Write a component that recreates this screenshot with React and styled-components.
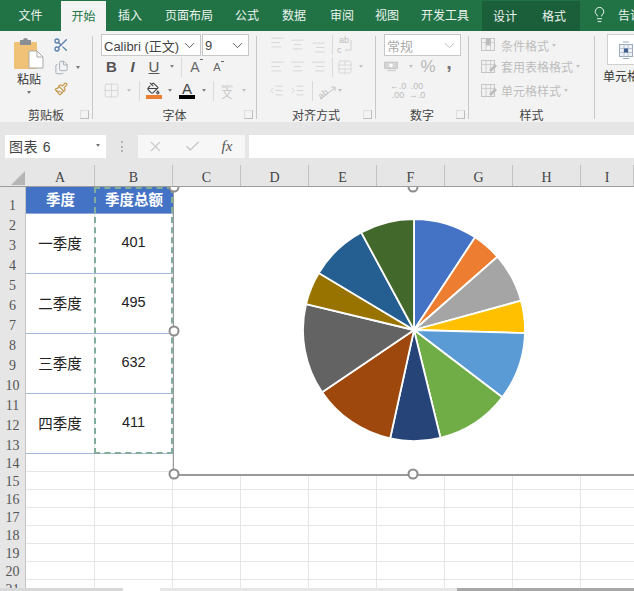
import React from 'react'
import styled, { createGlobalStyle } from 'styled-components'
import {
  AlignCenter, AlignLeft, AlignRight, Check, ChevronDown, Files, Grid2x2,
  IndentDecrease, IndentIncrease, Lightbulb, Paintbrush, PaintBucket, Scissors,
  TableCellsMerge, X,
} from 'lucide-react'

const CJK = '"Liberation Sans", "Noto Sans CJK SC", sans-serif'

const GlobalStyle = createGlobalStyle`
  html, body { margin: 0; padding: 0; overflow: hidden; background: #fff; }
  body { font-family: ${CJK}; }
`

const Page = styled.div`
  width: 634px;
  height: 591px;
  display: flex;
  flex-direction: column;
  overflow: hidden;
`

/* ---------- title tabs ---------- */
const TabBar = styled.div`
  height: 31px;
  flex: none;
  display: flex;
  background: #217346;
`

const Tab = styled.div`
  flex: none;
  width: ${p => p.$w}px;
  box-sizing: border-box;
  padding-bottom: 2px;
  margin-top: ${p => (p.$active || p.$tool ? 1 : 0)}px;
  display: flex;
  align-items: center;
  justify-content: ${p => (p.$left ? 'flex-start' : 'center')};
  white-space: nowrap;
  font-size: 12px;
  color: ${p => (p.$active ? '#217346' : '#edf4f0')};
  background: ${p => (p.$active ? '#f3f3f3' : p.$tool ? '#1b5e3a' : 'transparent')};
`

/* ---------- ribbon ---------- */
const Ribbon = styled.div`
  height: 91px;
  flex: none;
  display: flex;
  background: #f3f3f3;
  overflow: hidden;
`

const Group = styled.div`
  flex: none;
  width: ${p => p.$w}px;
  display: flex;
  flex-direction: column;
`

const Divider = styled.div`
  flex: none;
  width: 1px;
  margin: 5px 0 3px;
  background: #c9c9c9;
`

const GroupBody = styled.div`
  height: 72px;
  padding: 3px 0 0 ${p => p.$pad || 0}px;
  display: grid;
  grid-template-rows: 22px 21px 27px;
`

const GroupFoot = styled.div`
  position: relative;
  height: 16px;
  display: flex;
  align-items: center;
  justify-content: center;
  font-size: 12px;
  color: #444;
`

const Expander = styled.span`
  position: absolute;
  right: ${p => p.$r}px;
  top: 4px;
  width: 7px;
  height: 7px;
  border: 1px solid #bdbdbd;
  border-top-color: #dedede;
  border-left-color: #dedede;
`

const IconRow = styled.div`
  display: flex;
  align-items: center;
`

const Slot = styled.div`
  flex: none;
  width: ${p => p.$w}px;
  margin-top: ${p => p.$dy || 0}px;
  display: flex;
  align-items: center;
  justify-content: center;
  color: ${p => p.$color || '#cdcdcd'};
`

const Sep = styled.div`
  width: 1px;
  height: 20px;
  background: #dadada;
`

const Caret = styled.span`
  width: 0;
  height: 0;
  border-left: 2.5px solid transparent;
  border-right: 2.5px solid transparent;
  border-top: 3px solid ${p => p.$color || '#c4c4c4'};
`

const PasteCol = styled.div`
  flex: none;
  width: 53px;
  box-sizing: border-box;
  padding: 7px 0 0 5px;
  display: flex;
  flex-direction: column;
  align-items: center;
  font-size: 12px;
  line-height: 16px;
  color: #333;
`

const PasteText = styled.span`
  margin: 3px 0 3px;
`

const ClipBody = styled.div`
  height: 75px;
  display: flex;
`

const ClipTools = styled.div`
  padding-top: 3px;
  display: grid;
  grid-template-rows: 22px 22px 22px;
`

const Select = styled.div`
  height: 22px;
  width: ${p => p.$w}px;
  box-sizing: border-box;
  flex: none;
  margin-right: ${p => p.$gap || 0}px;
  padding: 0 2px;
  display: flex;
  align-items: center;
  justify-content: space-between;
  background: #fff;
  border: 1px solid #c8c8c8;
  font-size: 13px;
  white-space: nowrap;
  color: ${p => p.$color || '#444'};
`

const FontLetter = styled.span`
  font-family: "Liberation Sans", sans-serif;
  font-size: 15px;
  font-weight: ${p => (p.$bold ? 700 : 400)};
  font-style: ${p => (p.$italic ? 'italic' : 'normal')};
  text-decoration: ${p => (p.$under ? 'underline' : 'none')};
  color: #555;
`

const SizeLetter = styled.span`
  position: relative;
  font-size: ${p => p.$size}px;
  color: #666;
  &::after {
    content: '';
    position: absolute;
    right: -3px;
    top: 0;
    width: 3px;
    height: 1px;
    background: #666;
  }
`

const ColorLetter = styled.div`
  display: flex;
  flex-direction: column;
  align-items: center;
  font-size: 15px;
  line-height: 13px;
  color: #444;
`

const ColorBar = styled.div`
  width: ${p => p.$w}px;
  height: 4px;
  background: ${p => p.$color};
`

const Wen = styled.div`
  display: flex;
  flex-direction: column;
  align-items: center;
  font-size: 11px;
  line-height: 10px;
  color: #c4c4c4;
  & > small { font-size: 6px; line-height: 6px; }
`

const Percent = styled.span`
  font-size: 17px;
  color: #b8b8b8;
`

const Comma = styled.span`
  margin-top: -9px;
  font-size: 20px;
  font-weight: 700;
  line-height: 20px;
  color: #777;
`

const Decimals = styled.div`
  font-size: 9px;
  line-height: 9px;
  text-align: center;
  color: #bbb;
`

const StyleRow = styled.div`
  display: flex;
  align-items: center;
  font-size: 12px;
  color: #bdbdbd;
  white-space: nowrap;
`

const StyleIcon = styled.div`
  flex: none;
  width: 20px;
  margin-right: 2px;
  display: flex;
  justify-content: center;
`

const CellBox = styled.div`
  width: 50px;
  height: 31px;
  margin: 3px 0 3px 12px;
  padding-left: 8px;
  box-sizing: border-box;
  display: flex;
  align-items: center;
  background: #fff;
  border: 1px solid #d0d0d0;
`

const CellLabel = styled.div`
  padding-left: 8px;
  font-size: 12px;
  line-height: 18px;
  white-space: nowrap;
  color: #333;
`

const CellCaret = styled.div`
  padding: 5px 0 0 26px;
  line-height: 0;
`

/* ---------- formula bar ---------- */
const FormulaBar = styled.div`
  height: 43px;
  flex: none;
  box-sizing: border-box;
  padding: 13px 0 7px 5px;
  display: flex;
  background: #e6e6e6;
`

const NameBox = styled.div`
  flex: none;
  width: 101px;
  box-sizing: border-box;
  padding: 0 6px 2px 4px;
  display: flex;
  align-items: center;
  justify-content: space-between;
  background: #fff;
  font-size: 14px;
  letter-spacing: 0.6px;
  color: #444;
`

const Grip = styled.div`
  flex: none;
  width: 32px;
  display: flex;
  align-items: center;
  justify-content: center;
  &::before {
    content: '';
    height: 11px;
    border-left: 2px dotted #b4b4b4;
  }
`

const FxButtons = styled.div`
  flex: none;
  width: 107px;
  margin-right: 4px;
  display: flex;
  align-items: center;
  background: #f7f7f7;
`

const FxSlot = styled.div`
  flex: none;
  width: ${p => p.$w}px;
  display: flex;
  justify-content: center;
  color: ${p => p.$color || '#c8c8c8'};
  font-family: "Liberation Serif", serif;
  font-style: italic;
  font-size: 15px;
`

const FormulaInput = styled.div`
  flex: 1;
  background: #fff;
`

/* ---------- sheet ---------- */
const ColHeader = styled.div`
  height: 22px;
  flex: none;
  box-sizing: border-box;
  display: flex;
  background: #e6e6e6;
  border-bottom: 1px solid #9c9c9c;
`

const Corner = styled.div`
  flex: none;
  width: 26px;
  box-sizing: border-box;
  padding: 6px 0 0 11px;
  line-height: 0;
`

const ColName = styled.div`
  flex: none;
  width: ${p => p.$w}px;
  box-sizing: border-box;
  display: flex;
  align-items: center;
  justify-content: center;
  padding-top: 4px;
  border-right: 1px solid #c2c2c2;
  font-family: "Liberation Serif", serif;
  font-size: 14px;
  color: #444;
`

const Body = styled.div`
  flex: 1;
  min-height: 0;
  display: flex;
  overflow: hidden;
`

const RowHeaders = styled.div`
  flex: none;
  width: 26px;
  box-sizing: border-box;
  background: #e6e6e6;
  border-right: 1px solid #c4c4c4;
`

const RowName = styled.div`
  height: ${p => p.$h}px;
  box-sizing: border-box;
  padding-bottom: 1px;
  display: flex;
  align-items: flex-end;
  justify-content: center;
  font-family: "Liberation Serif", serif;
  font-size: 14px;
  line-height: 15px;
  color: #555;
`

const Sheet = styled.div`
  position: relative;
  flex: 1;
  min-width: 0;
  overflow: hidden;
  display: grid;
  grid-template-columns: 69px 78px repeat(7, 68px);
  grid-template-rows: ${p => p.$rows};
  background: #fff;
`

const Cell = styled.div`
  box-sizing: border-box;
  border-right: 1px solid #e6e6e6;
  border-bottom: 1px solid #e6e6e6;
`

const HeadCell = styled.div`
  box-sizing: border-box;
  padding-bottom: 3px;
  display: flex;
  align-items: center;
  justify-content: center;
  background: #4472c4;
  border-bottom: 1px solid #8eaadb;
  font-size: 14.5px;
  font-weight: 700;
  color: #fff;
`

const DataCell = styled.div`
  grid-row: span 3;
  box-sizing: border-box;
  padding-bottom: 3px;
  display: flex;
  align-items: center;
  justify-content: center;
  border-bottom: 1px solid #a3b9dc;
  border-right: 1px solid #e6e6e6;
  font-size: 14.5px;
  color: #222;
`

const CopyMarquee = styled.div`
  position: absolute;
  left: 68px;
  top: 0;
  width: 79px;
  height: 267px;
  box-sizing: border-box;
  border: 2px dashed #82ad9c;
`

const Chart = styled.div`
  position: absolute;
  left: 147px;
  top: 0;
  width: 480px;
  height: 289px;
  box-sizing: border-box;
  padding: 0 0 2px 1px;
  display: flex;
  align-items: center;
  justify-content: center;
  background: #fff;
  border-right: 1px solid #9a9a9a;
  border-left: 1.5px solid #9a9a9a;
  border-bottom: 2px solid #9a9a9a;
`

const Handle = styled.span`
  position: absolute;
  left: ${p => p.$x};
  top: ${p => p.$y};
  width: 11px;
  height: 11px;
  box-sizing: border-box;
  transform: translate(-50%, -50%);
  background: #fff;
  border: 2px solid #8c8c8c;
  border-radius: 50%;
`

const SheetTabs = styled.div`
  height: 3px;
  flex: none;
  display: flex;
  background: #e4e4e4;
`

const SheetTabFill = styled.div`
  flex: ${p => (p.$grow ? 1 : 'none')};
  width: ${p => p.$w}px;
  background: ${p => p.$color};
`

/* ---------- data ---------- */
const TABS = [
  ['文件', 61], ['开始', 45, 'active'], ['插入', 48], ['页面布局', 70], ['公式', 46], ['数据', 48],
  ['审阅', 48], ['视图', 42], ['开发工具', 74], ['设计', 46, 'tool'], ['格式', 52, 'tool'],
]
const COLUMNS = [['A', 69], ['B', 78], ['C', 68], ['D', 68], ['E', 68], ['F', 68], ['G', 68], ['H', 68], ['I', 53]]
const ROW_HEIGHTS = [27, ...Array(12).fill(20), ...Array(8).fill(18)]
const QUARTERS = [['一季度', 401], ['二季度', 495], ['三季度', 632], ['四季度', 411]]
const PIE = [
  [33.4, '#4472c4'], [48.7, '#ed7d31'], [74.7, '#a5a5a5'], [91.6, '#ffc000'],
  [127.3, '#5b9bd5'], [166.2, '#70ad47'], [192.4, '#264478'], [235.9, '#9e480e'],
  [283.5, '#636363'], [300.9, '#997300'], [331.6, '#255e91'], [360, '#43682b'],
]

function PasteIcon() {
  return (
    <svg width="30" height="31" viewBox="0 0 30 31">
      <rect x="0" y="4" width="23" height="27" rx="1" fill="#efc277" />
      <rect x="6" y="2" width="11" height="5" fill="#8a8f96" />
      <circle cx="11.5" cy="2.5" r="2.5" fill="#8a8f96" />
      <path d="M15 13h8l6 6v11H15z" fill="#fff" stroke="#a9a9a9" />
      <path d="M23 13v6h6" fill="none" stroke="#a9a9a9" />
    </svg>
  )
}

function WrapIcon() {
  return (
    <svg width="18" height="22" viewBox="0 0 18 22">
      <text x="3" y="9" fontSize="9" fill="#bdbdbd" fontFamily="Liberation Sans">ab</text>
      <text x="1" y="19" fontSize="9" fill="#bdbdbd" fontFamily="Liberation Sans">c</text>
      <path d="M9 16h6M15 6v10" stroke="#cfcfcf" fill="none" />
    </svg>
  )
}

function OrientIcon() {
  return (
    <svg width="20" height="18" viewBox="0 0 20 18">
      <text x="1" y="15" fontSize="9" fill="#bdbdbd" fontFamily="Liberation Sans" transform="rotate(-40 6 12)">ab</text>
      <path d="M3 17L18 6M14 5h4v4" stroke="#c4c4c4" fill="none" />
    </svg>
  )
}

function CurrencyIcon() {
  return (
    <svg width="20" height="16" viewBox="0 0 20 16">
      <rect x="1" y="1" width="18" height="9" fill="#d6d6d6" stroke="#b8b8b8" />
      <circle cx="10" cy="5.5" r="2.5" fill="#fff" />
      <path d="M5 13h12" stroke="#d0d0d0" strokeWidth="2" />
    </svg>
  )
}

function StyleTableIcon({ pen }) {
  return (
    <svg width="18" height="18" viewBox="0 0 18 18">
      <rect x="1.500" y="2.500" width="13" height="12" fill="#f2f2f2" stroke="#c4c4c4" />
      <path d="M1.500 6.500h13M6 2.500v12M10.500 2.500v12" stroke="#d0d0d0" />
      {pen ? <path d="M9 12l6-6 2 2-6 6z" fill="#bdbdbd" /> : <rect x="6" y="2.500" width="4.500" height="7" fill="#bdbdbd" />}
    </svg>
  )
}

function InsertCellIcon() {
  return (
    <svg width="20" height="20" viewBox="0 0 20 20">
      <rect x="3.500" y="4.500" width="13" height="12" fill="#eef1f6" stroke="#9ba9bd" />
      <path d="M3.500 8.500h13M3.500 12.500h13M8 4.500v12M12 4.500v12" stroke="#b8c2d0" />
      <rect x="8" y="8.500" width="4" height="4" fill="#3f5f8f" />
      <path d="M7 2h6M7 18.500h6" stroke="#9ba9bd" />
    </svg>
  )
}

function pieSlicePath(from, to, r, c) {
  const point = deg => {
    const a = ((deg - 90) * Math.PI) / 180
    return `${(c + r * Math.cos(a)).toFixed(2)} ${(c + r * Math.sin(a)).toFixed(2)}`
  }
  return `M${c} ${c}L${point(from)}A${r} ${r} 0 ${to - from > 180 ? 1 : 0} 1 ${point(to)}Z`
}

function PieChart() {
  return (
    <svg width="226" height="226" viewBox="0 0 226 226">
      {PIE.map(([end, color], i) => (
        <path
          key={color}
          d={pieSlicePath(i ? PIE[i - 1][0] : 0, end, 111, 113)}
          fill={color}
          stroke="#fff"
          strokeWidth="1.8"
        />
      ))}
    </svg>
  )
}

function Ribbons() {
  return (
    <Ribbon>
      <Group $w={92}>
        <ClipBody>
          <PasteCol>
            <PasteIcon />
            <PasteText>粘贴</PasteText>
            <Caret $color="#777" />
          </PasteCol>
          <ClipTools>
            <IconRow><Slot $w={16} $color="#5b80aa"><Scissors size={16} /></Slot></IconRow>
            <IconRow>
              <Slot $w={16} $color="#9aa5b2"><Files size={15} strokeWidth={1.4} /></Slot>
              <Slot $w={7} /><Caret $color="#777" />
            </IconRow>
            <IconRow><Slot $w={16} $color="#c59a4e"><Paintbrush size={14} /></Slot></IconRow>
          </ClipTools>
        </ClipBody>
        <GroupFoot>剪贴板<Expander $r={3} /></GroupFoot>
      </Group>
      <Divider />
      <Group $w={163}>
        <GroupBody $pad={8}>
          <IconRow>
            <Select $w={100} $gap={1}>Calibri (正文)<ChevronDown size={17} strokeWidth={1.2} /></Select>
            <Select $w={47}>9<ChevronDown size={17} strokeWidth={1.2} /></Select>
          </IconRow>
          <IconRow>
            <Slot $w={21}><FontLetter $bold>B</FontLetter></Slot>
            <Slot $w={21}><FontLetter $italic $bold>I</FontLetter></Slot>
            <Slot $w={22}><FontLetter $under>U</FontLetter></Slot>
            <Slot $w={14}><Caret $color="#888" /></Slot>
            <Slot $w={4}><Sep /></Slot>
            <Slot $w={24}><SizeLetter $size={14}>A</SizeLetter></Slot>
            <Slot $w={20}><SizeLetter $size={11}>A</SizeLetter></Slot>
          </IconRow>
          <IconRow>
            <Slot $w={20}><Grid2x2 size={17} strokeWidth={1} /></Slot>
            <Slot $w={16}><Caret /></Slot>
            <Slot $w={4}><Sep /></Slot>
            <Slot $w={25} $color="#777">
              <ColorLetter><PaintBucket size={13} /><ColorBar $w={16} $color="#ed7d31" /></ColorLetter>
            </Slot>
            <Slot $w={7}><Caret $color="#888" /></Slot>
            <Slot $w={28}><ColorLetter>A<ColorBar $w={16} $color="#000" /></ColorLetter></Slot>
            <Slot $w={6}><Caret $color="#888" /></Slot>
            <Slot $w={12}><Sep /></Slot>
            <Slot $w={16}><Wen><small>wén</small>文</Wen></Slot>
            <Slot $w={18}><Caret /></Slot>
          </IconRow>
        </GroupBody>
        <GroupFoot>字体<Expander $r={3} /></GroupFoot>
      </Group>
      <Divider />
      <Group $w={118}>
        <GroupBody $pad={9}>
          <IconRow>
            <Slot $w={22} $dy={-6}><AlignLeft size={15} strokeWidth={1.2} /></Slot>
            <Slot $w={18} $dy={-2}><AlignCenter size={15} strokeWidth={1.2} /></Slot>
            <Slot $w={24} $dy={4}><AlignRight size={15} strokeWidth={1.2} /></Slot>
            <Slot $w={4}><Sep /></Slot>
            <Slot $w={22}><WrapIcon /></Slot>
          </IconRow>
          <IconRow>
            <Slot $w={22}><AlignLeft size={15} strokeWidth={1.2} /></Slot>
            <Slot $w={18}><AlignCenter size={15} strokeWidth={1.2} /></Slot>
            <Slot $w={24}><AlignRight size={15} strokeWidth={1.2} /></Slot>
            <Slot $w={4}><Sep /></Slot>
            <Slot $w={22}><TableCellsMerge size={16} strokeWidth={1} /></Slot>
            <Slot $w={10}><Caret /></Slot>
          </IconRow>
          <IconRow>
            <Slot $w={20}><IndentDecrease size={15} strokeWidth={1.2} /></Slot>
            <Slot $w={22}><IndentIncrease size={15} strokeWidth={1.2} /></Slot>
            <Slot $w={8}><Sep /></Slot>
            <Slot $w={22}><OrientIcon /></Slot>
            <Slot $w={4}><Caret /></Slot>
          </IconRow>
        </GroupBody>
        <GroupFoot>对齐方式<Expander $r={3} /></GroupFoot>
      </Group>
      <Divider />
      <Group $w={92}>
        <GroupBody $pad={8}>
          <IconRow><Select $w={77} $color="#aaa">常规<ChevronDown size={17} strokeWidth={1} /></Select></IconRow>
          <IconRow>
            <Slot $w={14}><CurrencyIcon /></Slot>
            <Slot $w={26}><Caret /></Slot>
            <Slot $w={8}><Percent>%</Percent></Slot>
            <Slot $w={34}><Comma>,</Comma></Slot>
          </IconRow>
          <IconRow>
            <Slot $w={5} />
            <Slot $w={18}><Decimals>←.0<br />.00</Decimals></Slot>
            <Slot $w={20}><Decimals>.00<br />→.0</Decimals></Slot>
          </IconRow>
        </GroupBody>
        <GroupFoot>数字<Expander $r={3} /></GroupFoot>
      </Group>
      <Divider />
      <Group $w={125}>
        <GroupBody $pad={10}>
          <StyleRow><StyleIcon><StyleTableIcon /></StyleIcon>条件格式<Slot $w={10}><Caret /></Slot></StyleRow>
          <StyleRow><StyleIcon><StyleTableIcon pen /></StyleIcon>套用表格格式<Slot $w={10}><Caret /></Slot></StyleRow>
          <StyleRow><StyleIcon><StyleTableIcon pen /></StyleIcon>单元格样式<Slot $w={10}><Caret /></Slot></StyleRow>
        </GroupBody>
        <GroupFoot>样式</GroupFoot>
      </Group>
      <Divider />
      <Group $w={60}>
        <CellBox><InsertCellIcon /></CellBox>
        <CellLabel>单元格格式</CellLabel>
        <CellCaret><Caret $color="#777" /></CellCaret>
      </Group>
    </Ribbon>
  )
}

export default function App() {
  return (
    <Page>
      <GlobalStyle />
      <TabBar>
        {TABS.map(([name, w, kind]) => (
          <Tab key={name} $w={w} $active={kind === 'active'} $tool={kind === 'tool'}>{name}</Tab>
        ))}
        <Tab $w={38}><Lightbulb size={17} strokeWidth={1.4} /></Tab>
        <Tab $w={60} $left>告诉我您想要做什么</Tab>
      </TabBar>
      <Ribbons />
      <FormulaBar>
        <NameBox>图表 6<Caret $color="#777" /></NameBox>
        <Grip />
        <FxButtons>
          <FxSlot $w={34}><X size={17} strokeWidth={1.6} /></FxSlot>
          <FxSlot $w={40}><Check size={17} strokeWidth={2} /></FxSlot>
          <FxSlot $w={30} $color="#555">fx</FxSlot>
        </FxButtons>
        <FormulaInput />
      </FormulaBar>
      <ColHeader>
        <Corner>
          <svg width="14" height="14" viewBox="0 0 14 14"><polygon points="14,0 14,14 0,14" fill="#b5b5b5" /></svg>
        </Corner>
        {COLUMNS.map(([name, w]) => <ColName key={name} $w={w}>{name}</ColName>)}
      </ColHeader>
      <Body>
        <RowHeaders>
          {ROW_HEIGHTS.map((h, i) => <RowName key={i} $h={h}>{i + 1}</RowName>)}
        </RowHeaders>
        <Sheet $rows={ROW_HEIGHTS.map(h => `${h}px`).join(' ')}>
          <HeadCell>季度</HeadCell>
          <HeadCell>季度总额</HeadCell>
          {Array.from({ length: 7 }, (_, i) => <Cell key={i} />)}
          {QUARTERS.map(([name, total]) => (
            <React.Fragment key={name}>
              <DataCell>{name}</DataCell>
              <DataCell>{total}</DataCell>
              {Array.from({ length: 21 }, (_, i) => <Cell key={i} />)}
            </React.Fragment>
          ))}
          {Array.from({ length: 72 }, (_, i) => <Cell key={i} />)}
          <CopyMarquee />
          <Chart>
            <PieChart />
            <Handle $x="0" $y="0" />
            <Handle $x="50%" $y="0" />
            <Handle $x="0" $y="50%" />
            <Handle $x="0" $y="100%" />
            <Handle $x="50%" $y="100%" />
          </Chart>
        </Sheet>
      </Body>
      <SheetTabs>
        <SheetTabFill $w={123} $color="#d8d8d8" />
        <SheetTabFill $w={37} $color="#fff" />
        <SheetTabFill $w={297} $color="#e6e6e6" />
        <SheetTabFill $grow $color="#a8a8a8" />
      </SheetTabs>
    </Page>
  )
}
